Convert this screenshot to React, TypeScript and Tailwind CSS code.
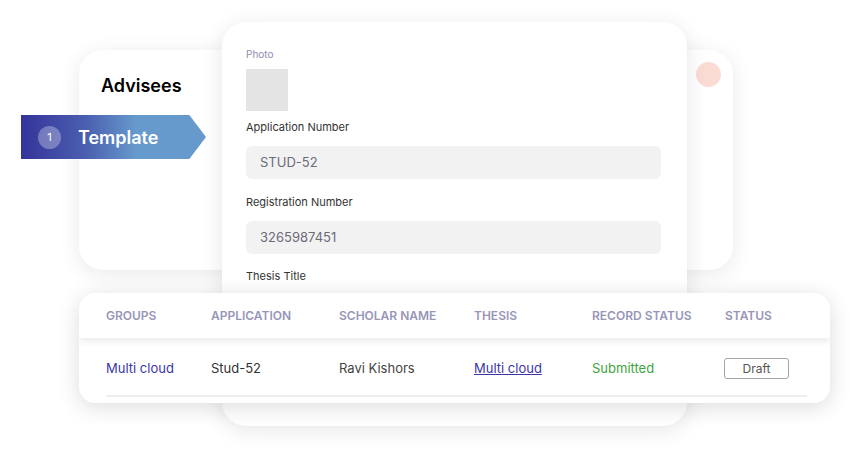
import React from 'react';

const font = { fontFamily: 'Inter, "Open Sans", sans-serif' };

const columns = [
  { key: 'groups', label: 'Groups', width: 'w-[105px]' },
  { key: 'application', label: 'Application', width: 'w-[128px]' },
  { key: 'scholar', label: 'Scholar Name', width: 'w-[135px]' },
  { key: 'thesis', label: 'Thesis', width: 'w-[118px]' },
  { key: 'record', label: 'Record Status', width: 'w-[133px]' },
  { key: 'status', label: 'Status', width: 'flex-1' },
];

const Field = ({ label, value }: { label: string; value: string }) => (
  <>
    <div className="text-[11px] leading-4 text-[#333] mt-[8px]">{label}</div>
    <div className="mt-[11px] h-[33px] rounded-[6px] bg-[#f2f2f3] flex items-center pl-[14px] text-[13px] text-[#6b6a78]">
      {value}
    </div>
  </>
);

export default function App() {
  return (
    <div className="relative w-[850px] h-[450px] bg-white overflow-hidden" style={font}>
      {/* back card */}
      <div className="absolute left-[79px] top-[50px] w-[654px] h-[220px] rounded-[24px] bg-white shadow-[0_4px_22px_rgba(0,0,0,0.09)]">
        <div className="pl-[22px] pt-[22px] text-[18px] font-semibold text-black">Advisees</div>
        <div className="absolute right-[12px] top-[12px] w-[25px] h-[25px] rounded-full bg-[#fbdcd4]" />
      </div>

      {/* ribbon */}
      <div className="absolute left-[21px] top-[115px] w-[185px] h-[44px] flex items-center bg-[linear-gradient(90deg,#35339a_0%,#4a5fb0_35%,#6699cc_62%,#6699cc_100%)] [clip-path:polygon(0_0,91%_0,100%_50%,91%_100%,0_100%)]">
        <div className="ml-[17px] w-[23px] h-[23px] rounded-full bg-[rgba(255,255,255,0.3)] text-white text-[11px] flex items-center justify-center">1</div>
        <div className="ml-[17px] text-white text-[18px] font-semibold">Template</div>
      </div>

      {/* form card */}
      <div className="absolute left-[222px] top-[22px] w-[465px] h-[404px] rounded-[24px] bg-white shadow-[0_4px_22px_rgba(0,0,0,0.1)] pl-[24px] pr-[26px] pt-[25px] flex flex-col">
        <div className="text-[10px] leading-[14px] text-[#8d8cb0]">Photo</div>
        <div className="mt-[8px] w-[42px] h-[42px] bg-[#e4e4e4]" />
        <Field label="Application Number" value="STUD-52" />
        <div className="h-[7px]" />
        <Field label="Registration Number" value="3265987451" />
        <div className="text-[11px] leading-4 text-[#333] mt-[14px]">Thesis Title</div>
      </div>

      {/* table card */}
      <div className="absolute left-[79px] top-[293px] w-[751px] h-[110px] rounded-[16px] bg-white shadow-[0_4px_22px_rgba(0,0,0,0.14)] overflow-hidden flex flex-col">
        <div className="h-[45px] flex items-center pl-[27px] shadow-[0_4px_6px_rgba(0,0,0,0.07)] relative">
          {columns.map(c => (
            <div key={c.key} className={`${c.width} text-[12px] font-semibold uppercase text-[#9896b8]`}>{c.label}</div>
          ))}
        </div>
        <div className="flex-1 flex items-center pl-[27px] pt-[4px] text-[13px]">
          <div className="w-[105px] text-[#3b35a5]">Multi cloud</div>
          <div className="w-[128px] text-[#333]">Stud-52</div>
          <div className="w-[135px] text-[#444]">Ravi Kishors</div>
          <div className="w-[118px] text-[#3b35a5] underline">Multi cloud</div>
          <div className="w-[133px] text-[#3da33d]">Submitted</div>
          <div className="flex-1">
            <div className="w-[65px] h-[21px] border border-[#a4a4ac] rounded-[3px] flex items-center justify-center text-[12px] text-[#555] -ml-[1px]">Draft</div>
          </div>
        </div>
        <div className="mr-[23px] ml-[27px] h-[2px] bg-[#eeeef0] mb-[6px]" />
      </div>
    </div>
  );
}
